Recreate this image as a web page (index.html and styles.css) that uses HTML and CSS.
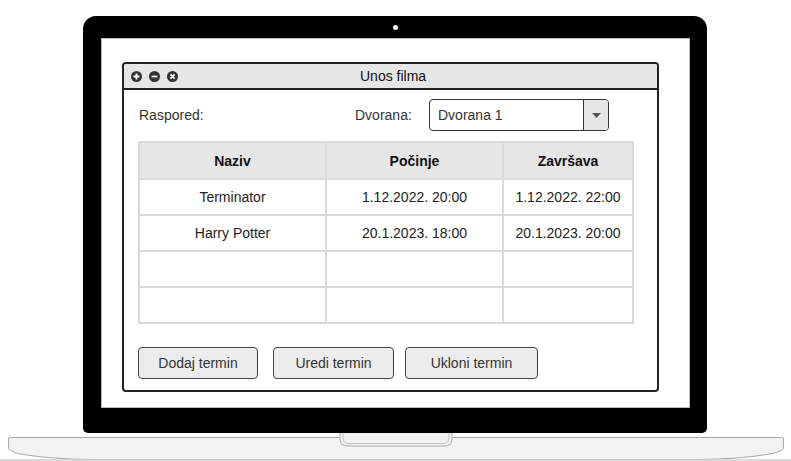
FILE: index.html
```html
<!DOCTYPE html>
<html>
<head>
<meta charset="utf-8">
<link rel="stylesheet" href="styles.css">
</head>
<body>
<div class="page">
  <div class="laptop">
    <span class="camera"></span>
    <div class="screen">
      <div class="window">
        <div class="titlebar">
          <div class="controls">
            <svg width="11" height="11" viewBox="0 0 11 11"><circle cx="5.5" cy="5.5" r="5.5" fill="#333"/><path d="M5.5 2.6v5.8M2.6 5.5h5.8" stroke="#fff" stroke-width="1.8"/></svg>
            <svg width="11" height="11" viewBox="0 0 11 11"><circle cx="5.5" cy="5.5" r="5.5" fill="#333"/><path d="M2.6 5.5h5.8" stroke="#fff" stroke-width="1.8"/></svg>
            <svg width="11" height="11" viewBox="0 0 11 11"><circle cx="5.5" cy="5.5" r="5.5" fill="#333"/><path d="M3.4 3.4l4.2 4.2M7.6 3.4l-4.2 4.2" stroke="#fff" stroke-width="1.7"/></svg>
          </div>
          <div class="title">Unos filma</div>
        </div>
        <div class="content">
          <div class="toprow">
            <span class="lbl-raspored">Raspored:</span>
            <span class="lbl-dvorana">Dvorana:</span>
            <div class="select">
              <span class="select-text">Dvorana 1</span>
              <span class="select-btn"><svg width="9" height="5" viewBox="0 0 9 5"><path d="M0 0h9L4.5 5z" fill="#555"/></svg></span>
            </div>
          </div>
          <table class="grid">
            <colgroup><col class="c1"><col class="c2"><col class="c3"></colgroup>
            <thead>
              <tr><th>Naziv</th><th>Počinje</th><th>Završava</th></tr>
            </thead>
            <tbody>
              <tr><td>Terminator</td><td>1.12.2022. 20:00</td><td>1.12.2022. 22:00</td></tr>
              <tr><td>Harry Potter</td><td>20.1.2023. 18:00</td><td>20.1.2023. 20:00</td></tr>
              <tr><td></td><td></td><td></td></tr>
              <tr><td></td><td></td><td></td></tr>
            </tbody>
          </table>
          <div class="buttons">
            <button class="btn b1">Dodaj termin</button>
            <button class="btn b2">Uredi termin</button>
            <button class="btn b3">Ukloni termin</button>
          </div>
        </div>
      </div>
    </div>
  </div>
  <svg class="base" width="791" height="28" viewBox="0 0 791 28">
    <path d="M9 4.5 H782 Q783.5 4.5 783.5 6 V15 Q783.5 18 770 21 Q740 26 700 26.5 H90 Q50 26 20 21 Q8.5 18 8.5 15 V6 Q8.5 4.5 10 4.5 Z" fill="#f4f3f4" stroke="#a8a8a8" stroke-width="1"/>
    <path d="M0 27 H791" stroke="#cfcfcf" stroke-width="1.5"/>
    <path d="M340 0 V6 Q340 13 348 13 H444 Q452 13 452 6 V0" fill="#f4f3f4" stroke="#a8a8a8" stroke-width="1"/>
    <path d="M343 0 V5 Q343 10.5 349 10.5 H443 Q449 10.5 449 5 V0" fill="none" stroke="#c4c4c4" stroke-width="1"/>
  </svg>
</div>
</body>
</html>
```
FILE: styles.css
```css
* { box-sizing: border-box; }
html, body { margin: 0; padding: 0; background: #fff; }
body { font-family: "Liberation Sans", Arial, sans-serif; font-size: 14px; color: #333; }

.page { width: 791px; height: 461px; padding-top: 16px; overflow: hidden; }

.laptop {
  position: relative;
  margin-left: 83px;
  width: 624px;
  height: 417px;
  background: #000;
  border-radius: 13px 13px 5px 5px;
  padding: 22px 17px 25px 18px;
}
.camera {
  position: absolute;
  left: 310px;
  top: 9px;
  width: 5px;
  height: 5px;
  border-radius: 50%;
  background: #fff;
}
.screen {
  width: 589px;
  height: 370px;
  background: #fff;
  border: 1px solid #bbb;
  padding: 23px 0 0 20px;
}
.window {
  width: 537px;
  height: 330px;
  border: 2px solid #222;
  border-radius: 4px;
  background: #fff;
  display: flex;
  flex-direction: column;
}
.titlebar {
  height: 26px;
  flex: 0 0 26px;
  background: #e6e6e6;
  border-bottom: 2px solid #222;
  border-radius: 2px 2px 0 0;
  display: flex;
  align-items: center;
  padding-left: 7px;
}
.controls { display: flex; gap: 7px; width: 140px; }
.controls svg { display: block; }
.title { flex: 0 0 auto; margin-left: 89px; color: #111; font-size: 14px; }

.content { padding: 9px 0 0 14px; }
.toprow { display: flex; align-items: center; height: 32px; }
.lbl-raspored { width: 217px; padding-left: 1px; }
.lbl-dvorana { width: 74px; }
.select {
  width: 180px;
  height: 32px;
  border: 1px solid #333;
  border-radius: 4px;
  display: flex;
  overflow: hidden;
}
.select-text { flex: 1; padding-left: 8px; line-height: 30px; }
.select-btn {
  width: 25px;
  border-left: 1px solid #333;
  background: #e6e6e6;
  display: flex;
  align-items: center;
  justify-content: center;
}

.grid {
  margin-top: 10px;
  border-collapse: collapse;
  width: 494px;
  table-layout: fixed;
}
.c1 { width: 187px; }
.c2 { width: 177px; }
.c3 { width: 130px; }
.grid th, .grid td {
  border: 2px solid #dadada;
  text-align: center;
  padding: 0;
  font-size: 14px;
}
.grid th { height: 37px; background: #e6e6e6; font-weight: bold; color: #111; }
.grid td { height: 36px; color: #222; }

.buttons { display: flex; margin-top: 23px; }
.btn {
  height: 32px;
  background: #ececec;
  border: 1px solid #444;
  border-radius: 4px;
  font-family: "Liberation Sans", Arial, sans-serif;
  font-size: 14px;
  color: #333;
  padding: 0;
}
.b1 { width: 120px; }
.b2 { width: 121px; margin-left: 15px; }
.b3 { width: 133px; margin-left: 11px; }

.base { display: block; }
```
